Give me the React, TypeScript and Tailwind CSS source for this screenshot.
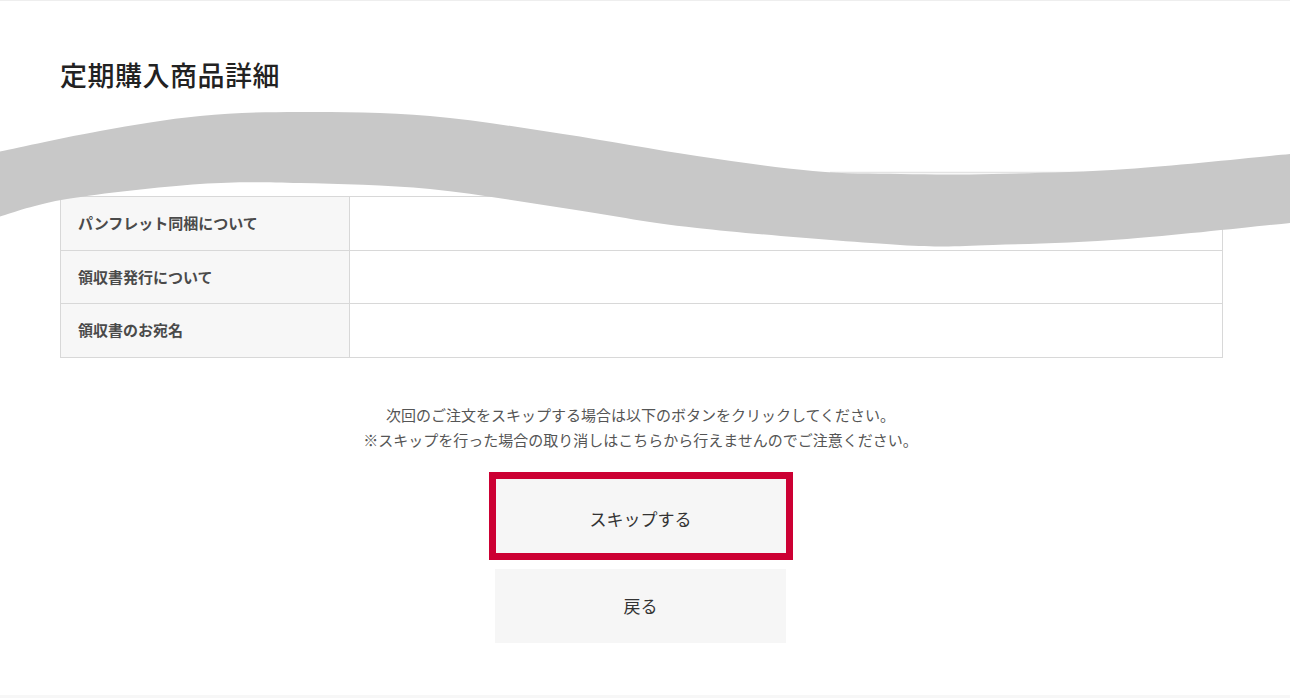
import React from "react";

type Pt = [number, number];

function smoothPath(points: Pt[]): string {
  let d = `M${points[0][0]},${points[0][1]}`;
  for (let i = 0; i < points.length - 1; i++) {
    const p0 = points[i - 1] || points[i];
    const p1 = points[i];
    const p2 = points[i + 1];
    const p3 = points[i + 2] || p2;
    const c1x = p1[0] + (p2[0] - p0[0]) / 6;
    const c1y = p1[1] + (p2[1] - p0[1]) / 6;
    const c2x = p2[0] - (p3[0] - p1[0]) / 6;
    const c2y = p2[1] - (p3[1] - p1[1]) / 6;
    d += ` C${c1x},${c1y} ${c2x},${c2y} ${p2[0]},${p2[1]}`;
  }
  return d;
}

const topEdge: Pt[] = [
  [-2, 151],
  [100, 130],
  [200, 115],
  [300, 111],
  [430, 115],
  [563, 133],
  [697, 155],
  [813, 170],
  [900, 173],
  [993, 173],
  [1127, 168],
  [1290, 153],
];

const bottomEdge: Pt[] = [
  [1290, 222],
  [1127, 238],
  [993, 244],
  [900, 244],
  [697, 227],
  [563, 207],
  [430, 188],
  [300, 182],
  [200, 183],
  [67, 198],
  [-2, 216],
];

function Wave() {
  const top = smoothPath(topEdge);
  const bottom = smoothPath(bottomEdge).replace(/^M/, "L");
  return (
    <svg
      className="absolute left-0 top-0 pointer-events-none"
      width={1290}
      height={300}
      viewBox="0 0 1290 300"
    >
      <line x1={830} y1={171.5} x2={1110} y2={171.5} stroke="#e4e4e4" strokeWidth={1.5} />
      <path d={`${top} ${bottom} Z`} fill="#c8c8c8" />
    </svg>
  );
}

const rows = [
  { label: "パンフレット同梱について", h: "h-[54px]" },
  { label: "領収書発行について", h: "h-[53px]" },
  { label: "領収書のお宛名", h: "h-[54px]" },
];

export default function App() {
  return (
    <div
      className="relative w-[1290px] h-[698px] overflow-hidden bg-white border-t border-[#eeeeee]"
      style={{ fontFamily: '"Noto Sans CJK JP", "Noto Sans", sans-serif' }}
    >
      <div className="px-[60px]">
        <h1 className="mt-[57px] text-[27px] leading-[34px] font-medium text-[#222222] tracking-[0.5px]">
          定期購入商品詳細
        </h1>

        <div className="mt-[104px] w-[1163px] border-t border-l border-r border-[#d8d8d8]">
          {rows.map((r) => (
            <div key={r.label} className={`flex ${r.h} border-b border-[#d8d8d8]`}>
              <div className="w-[289px] shrink-0 bg-[#f7f7f7] border-r border-[#d8d8d8] flex items-center pl-[17px] text-[15px] font-bold text-[#4a4a4a]">
                {r.label}
              </div>
              <div className="flex-1 bg-white" />
            </div>
          ))}
        </div>
      </div>

      <div className="mt-[44px] pr-[9px] flex flex-col items-center text-[15px] leading-[25px] text-[#555555]">
        <p>次回のご注文をスキップする場合は以下のボタンをクリックしてください。</p>
        <p>※スキップを行った場合の取り消しはこちらから行えませんのでご注意ください。</p>
      </div>

      <div className="mt-[27px] pr-[9px] flex flex-col items-center gap-[16px]">
        <button className="w-[290px] h-[74px] pt-[6px] bg-[#f6f6f6] text-[17px] text-[#333333] outline-[7px] outline-solid outline-[#cc0033] outline-offset-0">
          スキップする
        </button>
        <button className="w-[291px] h-[74px] bg-[#f6f6f6] text-[17px] text-[#333333]">
          戻る
        </button>
      </div>

      <div className="absolute left-0 right-0 bottom-0 h-[3px] bg-[#f7f7f7]" />
      <Wave />
    </div>
  );
}
